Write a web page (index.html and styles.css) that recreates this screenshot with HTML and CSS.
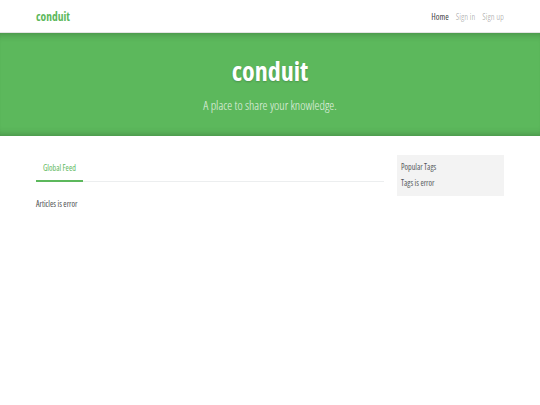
FILE: index.html
```html
<!DOCTYPE html>
<html lang="en">
<head>
<meta charset="UTF-8">
<meta name="viewport" content="width=device-width, initial-scale=1.0">
<title>Home — Conduit</title>
<link rel="stylesheet" href="styles.css">
</head>
<body>

<nav class="navbar">
    <div class="container nav-inner">
        <a class="brand" href="#">conduit</a>
        <ul class="nav-links">
            <li><a class="active" href="#">Home</a></li>
            <li><a href="#">Sign in</a></li>
            <li><a href="#">Sign up</a></li>
        </ul>
    </div>
</nav>

<div class="banner">
    <h1>conduit</h1>
    <p>A place to share your knowledge.</p>
</div>

<div class="container page">
    <div class="feed">
        <div class="feed-toggle">
            <a class="tab active" href="#">Global Feed</a>
        </div>
        <p class="status">Articles is error</p>
    </div>
    <div class="sidebar">
        <p>Popular Tags</p>
        <p>Tags is error</p>
    </div>
</div>

</body>
</html>
```

FILE: styles.css
```css
body {
    margin: 0;
    font-family: 'Open Sans', 'Roboto', sans-serif;
    font-stretch: 75%;
    color: #4a4d4f;
    background: #fff;
}
a { text-decoration: none; }
.container {
    width: 468px;
    margin: 0 auto;
}
.navbar {
    height: 32px;
    background: #fff;
    border-bottom: 1px solid #e4e4e4;
}
.nav-inner {
    display: flex;
    align-items: center;
    justify-content: space-between;
    height: 32px;
}
.brand {
    color: #5cb85c;
    font-weight: bold;
    font-size: 11.5px;
}
.nav-links {
    list-style: none;
    margin: 0;
    padding: 0;
    display: flex;
    gap: 7px;
    font-size: 8.5px;
}
.nav-links a { color: rgba(0, 0, 0, 0.3); }
.nav-links a.active { color: rgba(0, 0, 0, 0.8); }
.banner {
    background: #5cb85c;
    color: #fff;
    text-align: center;
    height: 103px;
    box-shadow: inset 0 8px 8px -8px rgba(0, 0, 0, 0.3), inset 0 -8px 8px -8px rgba(0, 0, 0, 0.3);
    padding-top: 20px;
    box-sizing: border-box;
}
.banner h1 {
    margin: 0;
    font-size: 26px;
    font-weight: bold;
    line-height: 36px;
    text-shadow: 0 1px 2px rgba(0, 0, 0, 0.2);
}
.banner p {
    margin: 8px 0 0;
    font-size: 12.5px;
    font-weight: 300;
    color: #e3f2e3;
}
.page {
    display: flex;
    gap: 13px;
    padding-top: 19px;
    font-size: 8px;
}
.feed { flex: 1; }
.feed-toggle {
    border-bottom: 1px solid #eceeef;
    display: flex;
}
.tab {
    color: #5cb85c;
    padding: 7px 7px 7px;
    border-bottom: 2px solid #5cb85c;
    margin-bottom: -1px;
}
.status {
    margin: 16px 0 0;
}
.sidebar {
    width: 99px;
    background: #f3f3f3;
    padding: 4px 4px 5px;
    align-self: flex-start;
    color: #55595c;
}
.sidebar p {
    margin: 0;
    line-height: 16px;
}
```
